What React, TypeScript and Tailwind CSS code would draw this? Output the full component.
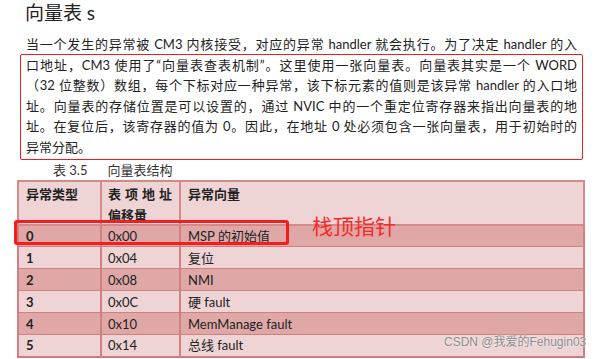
const font = "font-['Lato','Noto_Sans_CJK_SC',sans-serif]"

const rows = [
  { type: '0', offset: '0x00', vector: 'MSP 的初始值', dark: true },
  { type: '1', offset: '0x04', vector: '复位', dark: false },
  { type: '2', offset: '0x08', vector: 'NMI', dark: true },
  { type: '3', offset: '0x0C', vector: '硬 fault', dark: false },
  { type: '4', offset: '0x10', vector: 'MemManage fault', dark: true },
  { type: '5', offset: '0x14', vector: '总线 fault', dark: false },
]

const boxed = [
  '口地址，CM3 使用了“向量表查表机制”。这里使用一张向量表。向量表其实是一个 WORD',
  '（32 位整数）数组，每个下标对应一种异常，该下标元素的值则是该异常 handler 的入口地',
  '址。向量表的存储位置是可以设置的，通过 NVIC 中的一个重定位寄存器来指出向量表的地',
  '址。在复位后，该寄存器的值为 0。因此，在地址 0 处必须包含一张向量表，用于初始时的',
]

function Line({ text, last }: { text: string; last?: boolean }) {
  return (
    <div
      className={
        last
          ? 'h-[20.6px] whitespace-nowrap text-left'
          : 'h-[20.6px] whitespace-nowrap text-justify [text-align-last:justify]'
      }
    >
      {text}
    </div>
  )
}

export default function App() {
  return (
    <div className={`relative h-[359px] w-[602px] overflow-hidden bg-white text-[#222] ${font}`}>
      <h1 className="pl-[25px] pt-[1px] text-[19px] leading-[24px]">向量表 s</h1>

      <div className="mt-[9px] w-[577px] pl-[26px] text-[13px] leading-[20.6px]">
        <Line text="当一个发生的异常被 CM3 内核接受，对应的异常 handler 就会执行。为了决定 handler 的入" />
        <div className="-mx-[6px] mt-[-1px] rounded-[2px] border border-[#ee1c1c] px-[5px] pb-[1px]">
          {boxed.map((t) => (
            <Line key={t} text={t} />
          ))}
          <Line text="异常分配。" last />
        </div>
      </div>

      <div className="mt-[1px] flex h-[18px] items-center text-[13px] leading-[18px] text-[#333]">
        <span className="pl-[53px]">表 3.5</span>
        <span className="pl-[20px]">向量表结构</span>
      </div>

      <table className="ml-[17px] mt-[1px] w-[568px] table-fixed border-collapse border-2 border-[#cf7b7b] text-[13px] leading-[18px] text-[#222]">
        <colgroup>
          <col className="w-[83px]" />
          <col className="w-[79px]" />
          <col />
        </colgroup>
        <thead>
          <tr className="h-[44px] bg-[#efd4d5] align-top font-bold">
            <th className="border-2 border-[#d58a8a] pl-[7px] pt-[3px] text-left">异常类型</th>
            <th className="border-2 border-[#d58a8a] pl-[6px] pt-[3px] text-left">
              <div className="whitespace-nowrap tracking-[4px]">表项地址</div>
              <div className="mt-[3px]">偏移量</div>
            </th>
            <th className="border-2 border-[#d58a8a] pl-[7px] pt-[3px] text-left">异常向量</th>
          </tr>
        </thead>
        <tbody>
          {rows.map((r) => (
            <tr key={r.type} className={r.dark ? 'h-[22px] bg-[#dfa8a7]' : 'h-[22px] bg-[#efd4d5]'}>
              <td className="border-x-2 border-y border-[#d08080] pl-[7px] font-bold">{r.type}</td>
              <td className="border-x-2 border-y border-[#d08080] pl-[6px]">{r.offset}</td>
              <td className="border-x-2 border-y border-[#d08080] pl-[7px]">{r.vector}</td>
            </tr>
          ))}
        </tbody>
      </table>

      <div className="absolute left-[14px] top-[220px] h-[25px] w-[275px] rounded-[3px] border-[3px] border-[#f41c1c]" />
      <div className="absolute left-[312px] top-[212px] text-[21px] leading-[28px] text-[#f52a2a]">栈顶指针</div>

      <div className="absolute left-[444px] top-[334px] font-['Liberation_Sans','Noto_Sans_CJK_SC',sans-serif] text-[12px] leading-[16px] text-[#8a8a8a] [text-shadow:0_0_2px_#fff]">
        CSDN @我爱的Fehugin03
      </div>
    </div>
  )
}
